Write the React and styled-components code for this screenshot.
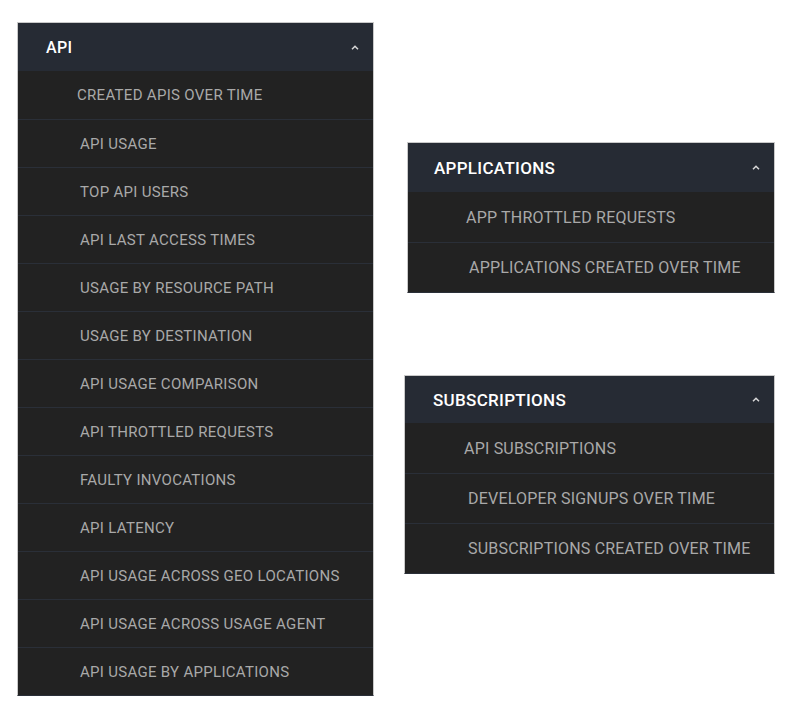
import React from "react";
import styled, { createGlobalStyle } from "styled-components";

const Global = createGlobalStyle`
  html, body { margin: 0; padding: 0; background: #ffffff; }
  body { font-family: Roboto, "Liberation Sans", Arial, sans-serif; }
`;

const Page = styled.div`
  display: flex;
  align-items: flex-start;
  padding: 22px 0 0 17px;
  width: 800px;
  height: 723px;
  box-sizing: border-box;
`;

const RightColumn = styled.div`
  display: flex;
  flex-direction: column;
  align-items: flex-end;
  width: 401px;
  padding-top: 120px;
  gap: 82px;
`;

const Panel = styled.div`
  width: ${(p) => p.$width}px;
  background: #222222;
  border: 1px solid #c9c9c9;
  border-bottom-color: #2a2f38;
  box-sizing: border-box;
  display: flex;
  flex-direction: column;
`;

const Header = styled.div`
  height: ${(p) => p.$h}px;
  background: #262b34;
  display: flex;
  align-items: center;
  justify-content: space-between;
  padding: 0 ${(p) => p.$pr}px 0 ${(p) => p.$pl}px;
  color: #ffffff;
  font-size: ${(p) => p.$fs}px;
  font-weight: 500;
  letter-spacing: 0.3px;
  flex-shrink: 0;
`;

const Caret = styled.svg`
  width: 8px;
  height: 5px;
  display: block;
`;

const Item = styled.div`
  height: ${(p) => p.$h}px;
  display: flex;
  align-items: center;
  padding-left: ${(p) => p.$pl}px;
  color: #a9a9a9;
  font-size: ${(p) => p.$fs}px;
  letter-spacing: ${(p) => p.$ls}px;
  box-sizing: border-box;
  border-top: ${(p) => (p.$first ? "none" : "1px solid #2a2f38")};
`;

const ChevronUp = () => (
  <Caret viewBox="0 0 8 5">
    <polyline points="1,4.2 4,1.2 7,4.2" fill="none" stroke="#d8d8d8" strokeWidth="1.5" />
  </Caret>
);

const Section = ({ title, items, width, headerH, rowH, fs, ls, hfs, hpl, hpr }) => (
  <Panel $width={width}>
    <Header $h={headerH} $fs={hfs} $pl={hpl} $pr={hpr}>
      <span>{title}</span>
      <ChevronUp />
    </Header>
    {items.map((it, i) => (
      <Item key={it.label} $first={i === 0} $h={rowH} $fs={fs} $ls={ls} $pl={it.pl}>
        {it.label}
      </Item>
    ))}
  </Panel>
);

const apiItems = [
  { label: "CREATED APIS OVER TIME", pl: 59 },
  { label: "API USAGE", pl: 62 },
  { label: "TOP API USERS", pl: 62 },
  { label: "API LAST ACCESS TIMES", pl: 62 },
  { label: "USAGE BY RESOURCE PATH", pl: 62 },
  { label: "USAGE BY DESTINATION", pl: 62 },
  { label: "API USAGE COMPARISON", pl: 62 },
  { label: "API THROTTLED REQUESTS", pl: 62 },
  { label: "FAULTY INVOCATIONS", pl: 62 },
  { label: "API LATENCY", pl: 62 },
  { label: "API USAGE ACROSS GEO LOCATIONS", pl: 62 },
  { label: "API USAGE ACROSS USAGE AGENT", pl: 62 },
  { label: "API USAGE BY APPLICATIONS", pl: 62 },
];

const appItems = [
  { label: "APP THROTTLED REQUESTS", pl: 58 },
  { label: "APPLICATIONS CREATED OVER TIME", pl: 61 },
];

const subItems = [
  { label: "API SUBSCRIPTIONS", pl: 59 },
  { label: "DEVELOPER SIGNUPS OVER TIME", pl: 63 },
  { label: "SUBSCRIPTIONS CREATED OVER TIME", pl: 63 },
];

export default function App() {
  return (
    <>
      <Global />
      <Page>
        <Section
          title="API"
          items={apiItems}
          width={357}
          headerH={48}
          rowH={48}
          fs={15}
          ls={0.3}
          hfs={16}
          hpl={28}
          hpr={14}
        />
        <RightColumn>
          <Section
            title="APPLICATIONS"
            items={appItems}
            width={368}
            headerH={49}
            rowH={50}
            fs={16}
            ls={0.2}
            hfs={17}
            hpl={26}
            hpr={14}
          />
          <Section
            title="SUBSCRIPTIONS"
            items={subItems}
            width={371}
            headerH={47}
            rowH={50}
            fs={16}
            ls={0.2}
            hfs={17}
            hpl={28}
            hpr={14}
          />
        </RightColumn>
      </Page>
    </>
  );
}
